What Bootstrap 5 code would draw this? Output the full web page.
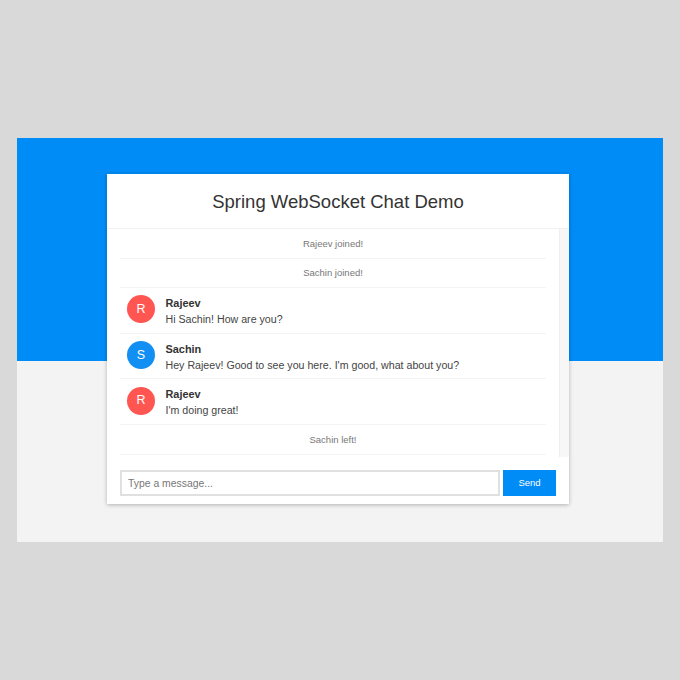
<!DOCTYPE html>
<html lang="en">
<head>
  <meta charset="UTF-8">
  <title>Spring WebSocket Chat Demo</title>
  <link href="https://cdn.jsdelivr.net/npm/bootstrap@5.3.0/dist/css/bootstrap.min.css" rel="stylesheet">
  <style>
    body {
      background-color: #d9d9d9;
      font-family: "Liberation Sans", Arial, sans-serif;
      color: #333;
    }
    .page-frame {
      margin: 138px 17px 0;
      height: 404px;
      padding: 36px 0 0 90px;
      background: linear-gradient(to bottom, #008cf7 223px, #f3f3f3 223px);
    }
    .chat-box {
      width: 462px;
      height: 330px;
      background-color: #fff;
      box-shadow: 0 1px 4px rgba(0, 0, 0, 0.27);
    }
    .chat-head {
      height: 55px;
      padding-top: 2px;
      border-bottom: 1px solid #f1f1f1;
    }
    .chat-head h2 {
      font-size: 18.5px;
      font-weight: 400;
      margin: 0;
      color: #333;
    }
    .chat-body {
      height: 228px;
    }
    .chat-list {
      padding: 0 13px;
      list-style: none;
      margin: 0;
    }
    .chat-track {
      width: 10px;
      background-color: #f7f7f7;
      border-left: 1px solid #eee;
    }
    .event-row {
      height: 29.6px;
      padding-top: 1px;
      border-bottom: 1px solid #f4f4f4;
      font-size: 9.5px;
      color: #777;
    }
    .msg-row {
      height: 45.6px;
      padding-left: 7px;
      gap: 10.5px;
      border-bottom: 1px solid #f4f4f4;
    }
    .avatar-dot {
      width: 28px;
      height: 28px;
      margin-bottom: 2px;
      border-radius: 50%;
      color: #fff;
      font-size: 12.5px;
    }
    .avatar-red { background-color: #ff5652; }
    .avatar-blue { background-color: #128ff2; }
    .msg-copy {
      padding-top: 1px;
    }
    .msg-name {
      font-size: 10.9px;
      font-weight: 700;
      line-height: 16px;
    }
    .msg-text {
      font-size: 10.65px;
      line-height: 16px;
      color: #444;
    }
    .chat-form {
      padding: 13px 13px 0;
      gap: 3px;
    }
    .msg-input {
      width: 380px;
      height: 26px;
      border: 2px solid #e0e0e0;
      border-radius: 0;
      padding: 0 6px;
      font-size: 10.4px;
    }
    .msg-input::placeholder { color: #777; }
    .send-btn {
      width: 53px;
      height: 26px;
      padding: 0;
      border: 0;
      border-radius: 0;
      background-color: #008cf7;
      color: #fff;
      font-size: 9.5px;
    }
  </style>
</head>
<body>
<div class="page-frame">
  <div class="chat-box">
    <div class="chat-head d-flex align-items-center justify-content-center">
      <h2>Spring WebSocket Chat Demo</h2>
    </div>
    <div class="chat-body d-flex">
      <ul class="chat-list flex-grow-1">
        <li class="event-row d-flex align-items-center justify-content-center">Rajeev joined!</li>
        <li class="event-row d-flex align-items-center justify-content-center">Sachin joined!</li>
        <li class="msg-row d-flex align-items-center">
          <span class="avatar-dot avatar-red d-flex align-items-center justify-content-center flex-shrink-0">R</span>
          <div class="msg-copy">
            <div class="msg-name">Rajeev</div>
            <div class="msg-text">Hi Sachin! How are you?</div>
          </div>
        </li>
        <li class="msg-row d-flex align-items-center">
          <span class="avatar-dot avatar-blue d-flex align-items-center justify-content-center flex-shrink-0">S</span>
          <div class="msg-copy">
            <div class="msg-name">Sachin</div>
            <div class="msg-text">Hey Rajeev! Good to see you here. I'm good, what about you?</div>
          </div>
        </li>
        <li class="msg-row d-flex align-items-center">
          <span class="avatar-dot avatar-red d-flex align-items-center justify-content-center flex-shrink-0">R</span>
          <div class="msg-copy">
            <div class="msg-name">Rajeev</div>
            <div class="msg-text">I'm doing great!</div>
          </div>
        </li>
        <li class="event-row d-flex align-items-center justify-content-center">Sachin left!</li>
      </ul>
      <div class="chat-track flex-shrink-0"></div>
    </div>
    <form class="chat-form d-flex">
      <input class="msg-input form-control" type="text" placeholder="Type a message...">
      <button class="send-btn btn btn-primary" type="button">Send</button>
    </form>
  </div>
</div>
<script src="https://cdn.jsdelivr.net/npm/bootstrap@5.3.0/dist/js/bootstrap.bundle.min.js"></script>
</body>
</html>
